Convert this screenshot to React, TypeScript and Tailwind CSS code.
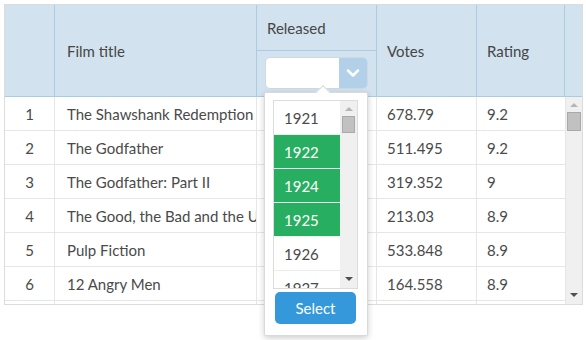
import { ChevronDown } from "lucide-react";

const FILMS = [
  { id: 1, title: "The Shawshank Redemption", votes: "678.79", rating: "9.2" },
  { id: 2, title: "The Godfather", votes: "511.495", rating: "9.2" },
  { id: 3, title: "The Godfather: Part II", votes: "319.352", rating: "9" },
  { id: 4, title: "The Good, the Bad and the Ugly", votes: "213.03", rating: "8.9" },
  { id: 5, title: "Pulp Fiction", votes: "533.848", rating: "8.9" },
  { id: 6, title: "12 Angry Men", votes: "164.558", rating: "8.9" },
];

const YEARS = [
  { year: "1921", on: false },
  { year: "1922", on: true },
  { year: "1924", on: true },
  { year: "1925", on: true },
  { year: "1926", on: false },
  { year: "1927", on: false },
];

export default function App() {
  return (
    <div className="relative h-[340px] w-[586px] bg-white pl-[4px] pt-[4px] font-['Lato','Roboto',sans-serif] text-[15px] text-[#4a4a4a]">
      <div className="w-[579px] border border-[#dcdcdc]">
        {/* header */}
        <div className="flex h-[92px] border-b border-[#a9cbe4] bg-[#d2e2ef] text-[#464646]">
          <div className="w-[50px] border-r border-[#a9cbe4]" />
          <div className="flex w-[202px] items-center border-r border-[#a9cbe4] pl-[12px] pt-[2px]">Film title</div>
          <div className="flex w-[120px] flex-col border-r border-[#a9cbe4]">
            <div className="flex h-[46px] items-center border-b border-[#a9cbe4] pl-[10px] pt-[2px]">Released</div>
            <div className="pl-[8px] pt-[6px]">
              <div className="flex h-[32px] w-[103px] overflow-hidden rounded-[5px] border border-[#cfd9e2] bg-white">
                <div className="flex-1" />
                <div className="flex w-[28px] items-center justify-center bg-[#b2d0e7]">
                  <ChevronDown className="h-[20px] w-[20px] text-white" strokeWidth={3} />
                </div>
              </div>
            </div>
          </div>
          <div className="flex w-[100px] items-center border-r border-[#a9cbe4] pl-[10px] pt-[2px]">Votes</div>
          <div className="flex w-[88px] items-center border-r border-[#a9cbe4] pl-[10px] pt-[2px]">Rating</div>
          <div className="w-[17px]" />
        </div>

        {/* body */}
        <div className="flex h-[207px] overflow-hidden">
          <div className="w-[560px]">
            {FILMS.map((f) => (
              <div key={f.id} className="flex h-[34px] border-b border-[#e6e6e6]">
                <div className="flex w-[50px] items-center justify-center border-r border-[#e6e6e6] pt-[2px]">{f.id}</div>
                <div className="flex w-[202px] items-center overflow-hidden whitespace-nowrap border-r border-[#e6e6e6] pl-[12px] pt-[2px]">
                  {f.title}
                </div>
                <div className="w-[120px] border-r border-[#e6e6e6]" />
                <div className="flex w-[100px] items-center border-r border-[#e6e6e6] pl-[10px] pt-[2px]">{f.votes}</div>
                <div className="flex w-[88px] items-center pl-[10px] pt-[2px]">{f.rating}</div>
              </div>
            ))}
            <div className="flex h-[34px]">
              <div className="w-[50px] border-r border-[#e6e6e6]" />
              <div className="w-[202px] border-r border-[#e6e6e6]" />
              <div className="w-[120px] border-r border-[#e6e6e6]" />
              <div className="w-[100px] border-r border-[#e6e6e6]" />
            </div>
          </div>
          <div className="flex w-[17px] flex-col items-center border-l border-[#e6e6e6] bg-[#f0f0f0]">
            <div className="mt-[6px] h-0 w-0 border-x-[4px] border-b-[4px] border-x-transparent border-b-[#b5b5b5]" />
            <div className="mt-[5px] h-[19px] w-[14px] border border-[#a9a9a9] bg-[#c1c1c1]" />
            <div className="flex-1" />
            <div className="mb-[7px] h-0 w-0 border-x-[4px] border-t-[4px] border-x-transparent border-t-[#505050]" />
          </div>
        </div>
      </div>

      {/* released filter popup */}
      <div className="absolute left-[264px] top-[92px] w-[104px] rounded-[2px] border border-[#dadada] bg-white pb-[11px] pl-[8px] pt-[7px] shadow-[0_2px_6px_rgba(0,0,0,0.2)]">
        <div className="absolute -top-[6px] left-[53px] h-[10px] w-[10px] rotate-45 border-l border-t border-[#dadada] bg-white" />
        <div className="relative flex h-[189px] w-[85px] overflow-hidden border border-[#dcdcdc]">
          <div className="flex-1">
            {YEARS.map((y) => (
              <div
                key={y.year}
                className={`flex h-[34px] items-center border-b pl-[10px] pt-[2px] ${
                  y.on ? "border-[#e9f5ee] bg-[#27ae60] text-white" : "border-[#ececec] bg-white text-[#4a4a4a]"
                }`}
              >
                {y.year}
              </div>
            ))}
          </div>
          <div className="flex w-[17px] flex-col items-center bg-[#f0f0f0]">
            <div className="mt-[6px] h-0 w-0 border-x-[4px] border-b-[4px] border-x-transparent border-b-[#b5b5b5]" />
            <div className="mt-[5px] h-[17px] w-[13px] border border-[#a9a9a9] bg-[#c1c1c1]" />
            <div className="flex-1" />
            <div className="mb-[7px] h-0 w-0 border-x-[4px] border-t-[4px] border-x-transparent border-t-[#505050]" />
          </div>
        </div>
        <button className="ml-[2px] mt-[3px] flex h-[32px] w-[81px] items-center justify-center rounded-[5px] bg-[#3498db] text-[15px] text-white">
          Select
        </button>
      </div>
    </div>
  );
}
